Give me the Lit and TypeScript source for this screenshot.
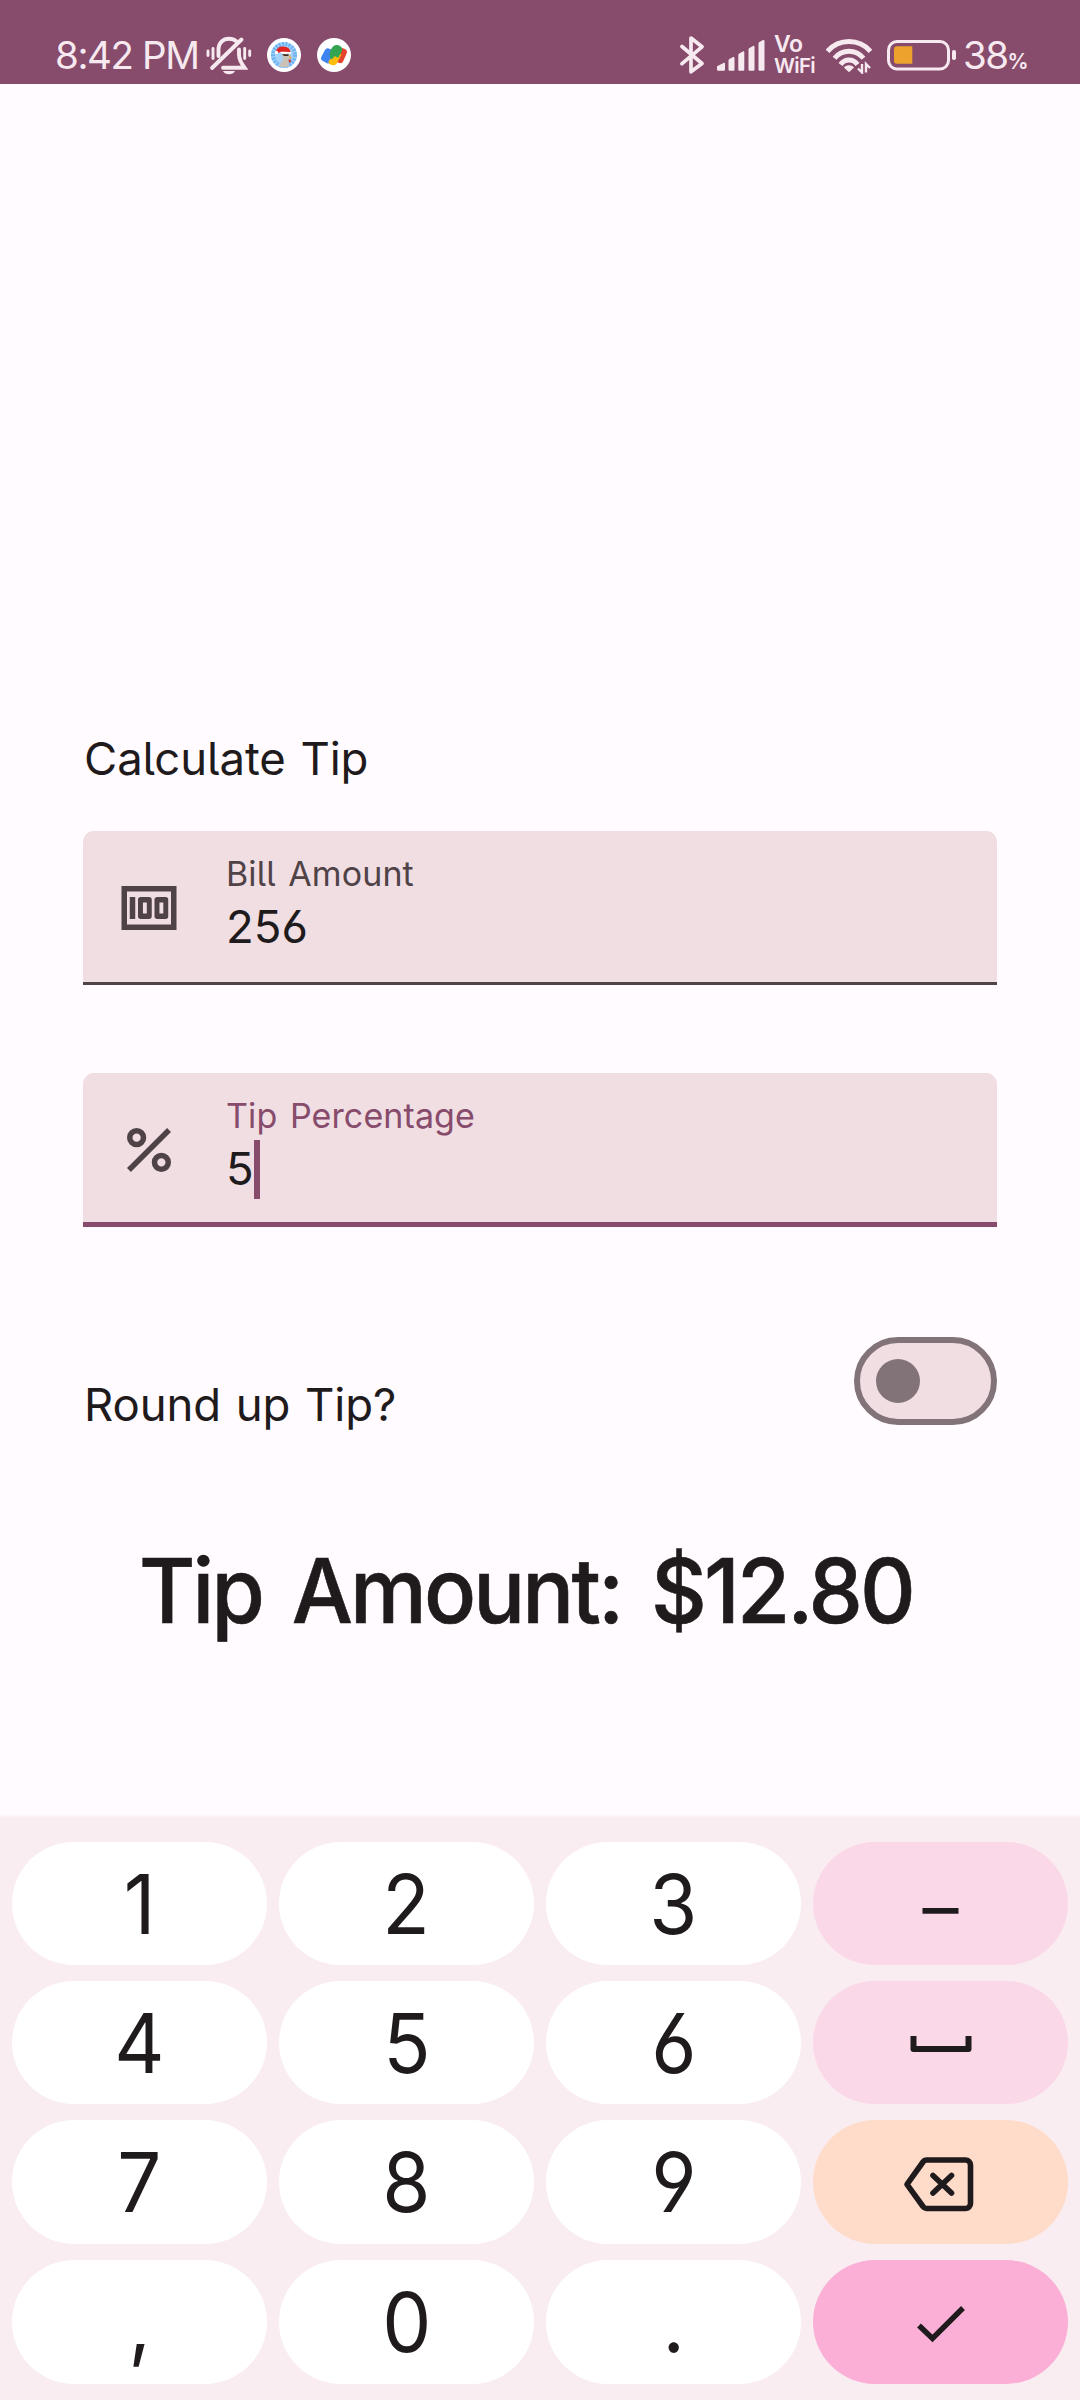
import { LitElement, html, css, svg } from "lit";
import { customElement, property, state } from "lit/decorators.js";

@customElement("status-bar")
class StatusBar extends LitElement {
  static styles = css`
    :host { display: block; }
    .bar {
      box-sizing: border-box; height: 84px; padding: 26px 0 0 55px;
      display: flex; align-items: flex-start; background: #874b6b; color: #f7e9f0;
      font-family: Inter, "Noto Sans", sans-serif;
    }
    svg { display: block; flex: none; }
    .time { width: 151px; font-size: 38.5px; line-height: 59px; letter-spacing: -1.4px; white-space: nowrap; }
    .bell { margin-top: 10px; }
    .app { margin: 12px 0 0 15px; }
    .app + .app { margin-left: 16px; }
    .fill { flex: 1; }
    .bt { margin: 9px 12px 0 0; }
    .sig { margin: 13px 8px 0 0; }
    .vo { margin: 8px 8px 0 0; width: 44px; font-weight: 600; line-height: 21px; white-space: nowrap; }
    .v1 { font-size: 23px; letter-spacing: -0.5px; }
    .v2 { font-size: 20.5px; letter-spacing: -0.7px; }
    .wifi { margin: 12px 12px 0 0; }
    .bat { margin: 13px 6px 0 0; }
    .pct { width: 117px; font-size: 38.5px; line-height: 59px; letter-spacing: -1.5px; white-space: nowrap; }
    .sign { font-size: 21px; font-weight: 600; }
  `;
  render() {
    return html`<div class="bar">
      <span class="time">8:42 PM</span>
      <svg class="bell" width="46" height="40" viewBox="0 0 46 40" fill="none" stroke="#f7e9f0" stroke-width="3.9" stroke-linecap="round">
        <path d="M12.5 20v-6.5C12.5 7 17 2.8 23 2.8c3 0 5.500.9 7.400 2.600M33 13.500v5c0 5 2 8.500 5.500 13.200H17M6 32 35.500 3.500"/>
        <path d="M2 15v4.500M7 12.500v10M38.700 12.500v10M43.700 15v4.500" stroke-width="2.900"/>
        <path d="M17 35h12c-1 2.300-3.300 3.300-6 3.300S18 37.300 17 35Z" fill="#f7e9f0" stroke="none"/>
      </svg>
      <svg class="app" width="34" height="34" viewBox="0 0 34 34">
        <circle cx="17" cy="17" r="17" fill="#fff"/>
        <circle cx="17" cy="17" r="13" fill="#a5d2f9"/>
        <circle cx="17" cy="17" r="11" fill="none" stroke="#6db3f4" stroke-width="4" stroke-dasharray="2 1.300"/>
        <path d="M14 13c2-2 8-2 9 1l1 6-2.500 1 .5 7c-3 2-8 1.500-10 0 1-3 3.500-4 4-8Z" fill="#c9c2b8"/>
        <path d="M8.500 14c1-4 4-6 8-5.500 4 .3 6.500 2 7 5.500l-9-.5-3 1.500Z" fill="#e32222"/>
        <circle cx="9.500" cy="14.500" r="1.700" fill="#fff"/>
        <path d="M13 14h11v1.800H15Z" fill="#fff"/>
        <path d="M15 16.300h6.500v1.700H17Z" fill="#3b3129"/>
        <path d="m22 18 3 1.500-2.500 1.500Z" fill="#e8a33a"/>
        <path d="M21.500 21.500h2.300v3h-1.800Z" fill="#d03028"/>
      </svg>
      <svg class="app" width="34" height="34" viewBox="0 0 34 34">
        <circle cx="17" cy="17" r="17" fill="#fff"/>
        <rect x="6" y="11" width="11" height="14" rx="3.500" transform="rotate(28 11.500 17)" fill="#3f83f0"/>
        <rect x="19.500" y="10" width="9" height="15" rx="3.500" transform="rotate(24 24 17)" fill="#e6432f"/>
        <path d="m19 14 5.500 2.500-4.500 8.500c-1.500 2.700-4.500 2.700-6.500 1.500-2-1-2.500-2.500-1.500-4Z" fill="#fbbc0a"/>
        <path d="M14 11.500c1.500-3.500 4.500-5.500 8-4 3 1.300 4 3.500 2.500 6.500l-3.500 6-3-2-3.500 3.500c-2-2-2.500-6-.5-10Z" fill="#33a452"/>
      </svg>
      <span class="fill"></span>
      <svg class="bt" width="25" height="40" viewBox="0 0 25 40" fill="none" stroke="#f7e9f0" stroke-width="3.700" stroke-linecap="round" stroke-linejoin="round">
        <path d="M2 11.500 22 28.500 11 36.800V3L22 11.800 2 28.700"/>
      </svg>
      <svg class="sig" width="49" height="33" viewBox="0 0 49 33" fill="#f7e9f0">
        <path d="M0 30.500v-3.200L6.500 24c.8-.4 1.500 0 1.500.8v5.700a1.200 1.200 0 0 1-1.200 1.300H1.200A1.200 1.200 0 0 1 0 30.500Z"/>
        <path d="M11.500 30.500V22c0-1 .3-1.500 1-1.900l3.500-2c.8-.4 1.500 0 1.500.8v11.600a1.200 1.200 0 0 1-1.200 1.300h-3.600a1.200 1.200 0 0 1-1.200-1.300Z"/>
        <path d="M21.300 30.500V16.300c0-1 .3-1.500 1-1.900l3.500-2c.8-.4 1.500 0 1.500.8v17.300a1.200 1.200 0 0 1-1.200 1.300h-3.600a1.200 1.200 0 0 1-1.200-1.300Z"/>
        <path d="M31.500 30.500V10.800c0-1 .3-1.500 1-1.900l3.500-2c.8-.4 1.500 0 1.500.8v22.800a1.200 1.200 0 0 1-1.200 1.300h-3.600a1.200 1.200 0 0 1-1.200-1.300Z"/>
        <path d="M41.500 30.500V5c0-1 .3-1.500 1-1.900l3.500-2c.8-.4 1.500 0 1.500.8v28.600a1.200 1.200 0 0 1-1.200 1.300h-3.600a1.200 1.200 0 0 1-1.200-1.300Z"/>
      </svg>
      <div class="vo"><div class="v1">Vo</div><div class="v2">WiFi</div></div>
      <svg class="wifi" width="49" height="36" viewBox="0 0 49 36" fill="none" stroke="#f7e9f0" stroke-width="4.900">
        <path d="M1.500 13.300C7 7 14.500 3.500 23 3.500s16 3.500 21.500 9.800M8.500 20.300c3.700-4.500 8.700-7 14.500-7s10.800 2.500 14.500 7M14.500 26.500c2-2.900 5-4.500 8.500-4.500s6.500 1.600 8.500 4.500"/>
        <path d="M18 29.500c2.500-3 7.500-3 10 0L23 34.300Z" fill="#f7e9f0" stroke="none"/>
        <path d="M36 26v8.500l-4-4M40 34.500V26l4 4" stroke-width="2.400"/>
      </svg>
      <svg class="bat" width="70" height="32" viewBox="0 0 70 32">
        <rect x="1.500" y="2.500" width="60" height="27.500" rx="8.500" fill="none" stroke="#f7e9f0" stroke-width="3"/>
        <path d="M10 7.300h15.300v17.400H10a3 3 0 0 1-3-3V10.300a3 3 0 0 1 3-3Z" fill="#eca22c"/>
        <rect x="65" y="11" width="4" height="10" rx="1.800" fill="#f7e9f0"/>
      </svg>
      <span class="pct">38<span class="sign">%</span></span>
    </div>`;
  }
}

@customElement("filled-field")
class FilledField extends LitElement {
  @property() label = "";
  @property() value = "";
  @property() icon = "money";
  @property({ type: Boolean }) active = false;
  static styles = css`
    :host { display: block; font-family: Inter, "Noto Sans", sans-serif; font-feature-settings: "cv03", "cv04", "cv05"; }
    .field {
      box-sizing: border-box; height: 154px; border-radius: 11px 11px 0 0; background: #f0dee3;
      border-bottom: 3px solid #504348; display: flex; color: #504348; padding-left: 33px;
    }
    .icon { width: 66px; height: 66px; margin-top: 44px; fill: #504348; flex: none; }
    .text { margin-left: 44px; padding-top: 21px; }
    .label { font-size: 34px; line-height: 44px; letter-spacing: 0.1px; word-spacing: 3px; white-space: nowrap; }
    .line { display: flex; align-items: center; height: 60px; margin-top: 1px; }
    .value { font-size: 45.5px; line-height: 60px; color: #1f1a1c; letter-spacing: 0; }
    .caret { width: 6px; height: 59px; background: #874b6b; }
    .active { border-bottom: 5px solid #874b6b; }
    .active .label { color: #874b6b; }
  `;
  render() {
    const glyph = this.icon === "money"
      ? svg`<path fill-rule="evenodd" d="M2 4h20v16H2ZM4 6v12h16V6ZM5 8h2v8H5ZM9 8h3a1 1 0 0 1 1 1v6a1 1 0 0 1-1 1H9a1 1 0 0 1-1-1V9a1 1 0 0 1 1-1ZM9.800 10v4h1.400v-4ZM15 8h3a1 1 0 0 1 1 1v6a1 1 0 0 1-1 1h-3a1 1 0 0 1-1-1V9a1 1 0 0 1 1-1ZM15.800 10v4h1.400v-4Z"/>`
      : svg`<path d="M7.500 4a3.500 3.500 0 1 0 0 7 3.500 3.500 0 0 0 0-7Zm0 5a1.500 1.500 0 1 1 0-3 1.500 1.500 0 0 1 0 3Zm9 4a3.500 3.500 0 1 0 0 7 3.500 3.500 0 0 0 0-7Zm0 5a1.500 1.500 0 1 1 0-3 1.500 1.500 0 0 1 0 3ZM5.410 20 4 18.590 18.590 4 20 5.410 5.410 20Z"/>`;
    return html`<div class="field ${this.active ? "active" : ""}">
      <svg class="icon" viewBox="0 0 24 24">${glyph}</svg>
      <div class="text">
        <div class="label">${this.label}</div>
        <div class="line"><span class="value">${this.value}</span>${this.active ? html`<span class="caret"></span>` : ""}</div>
      </div>
    </div>`;
  }
}

@customElement("number-pad")
class NumberPad extends LitElement {
  static styles = css`
    :host { display: block; font-family: Inter, "Noto Sans", sans-serif; font-feature-settings: "cv03", "cv04"; }
    .pad {
      box-sizing: border-box; height: 583px; padding: 25px 12px 0; background: #f9edf1;
      box-shadow: 0 -1px 2px #f9edf1;
      display: grid; grid-template-columns: repeat(4, 255px); grid-template-rows: 123px 123px 124px 124px;
      align-content: start; gap: 16px 12px;
    }
    .key {
      box-sizing: border-box; border-radius: 62px; background: #fff; color: #1f1a1c; font-size: 82px; line-height: 120px;
      display: flex; justify-content: center; align-items: center;
    }
    .digit { padding-top: 2px; }
    .digit span { transform: scaleX(0.95); }
    .pink { background: #fbd8e8; }
    .peach { background: #ffdbc9; padding-right: 3px; }
    .ok { background: #fbafd6; padding-top: 3px; }
    .dash { font-size: 72px; padding-top: 6px; }
    svg { display: block; fill: none; stroke: #1f1a1c; }
  `;
  private num(t: string) { return html`<div class="key digit"><span>${t}</span></div>`; }
  render() {
    return html`<div class="pad">
      ${["1", "2", "3"].map(this.num)}
      <div class="key pink dash">–</div>
      ${["4", "5", "6"].map(this.num)}
      <div class="key pink"><svg width="62" height="20" viewBox="0 0 62 20" stroke-width="6" stroke-linejoin="round"><path d="M3.500 3v13h55V3"/></svg></div>
      ${["7", "8", "9"].map(this.num)}
      <div class="key peach"><svg width="72" height="60" viewBox="0 0 72 60" stroke-width="5.600" stroke-linejoin="round" stroke-linecap="round"><path d="M24 8h38.500a5 5 0 0 1 5 5v38.500a5 5 0 0 1-5 5H23.500a4.500 4.500 0 0 1-3.500-2L4 32.300 20 10a4.500 4.500 0 0 1 4-2ZM30 23.500l18.500 17.500M48.500 23.500 30 41"/></svg></div>
      ${[",", "0", "."].map(this.num)}
      <div class="key ok"><svg width="50" height="40" viewBox="0 0 50 40" stroke-width="5.500"><path d="M3 21.500 16.500 34.500 47 4"/></svg></div>
    </div>`;
  }
}

@customElement("app-root")
class AppRoot extends LitElement {
  @state() private bill = "256";
  @state() private tip = "5";
  static styles = css`
    :host {
      display: block; width: 1080px; height: 2400px; overflow: hidden; background: #fffbff; color: #1f1a1c;
      font-family: Inter, "Noto Sans", sans-serif; font-feature-settings: "cv03", "cv04", "cv05";
    }
    .page { height: 2400px; display: flex; flex-direction: column; }
    .form { flex: 1; padding: 645px 83px 0; }
    .body { font-size: 45.500px; line-height: 60px; letter-spacing: -0.1px; word-spacing: 2px; padding-left: 1px; white-space: nowrap; }
    .first { margin-top: 42px; }
    .second { margin-top: 88px; }
    .row { display: flex; justify-content: space-between; align-items: flex-start; margin-top: 110px; height: 88px; }
    .row .body { padding-top: 38px; }
    .first, .second { height: 154px; }
    .switch {
      box-sizing: border-box; width: 143px; height: 88px; border: 6px solid #827379; border-radius: 44px;
      background: #f0dee3; padding: 16px; display: flex;
    }
    .thumb { width: 44px; height: 44px; border-radius: 50%; background: #827379; }
    .total { margin-top: 106px; padding-left: 56px; font-size: 90px; line-height: 120px; font-weight: 500; letter-spacing: -3px; word-spacing: 10px; white-space: nowrap; transform: scaleX(0.96); transform-origin: 56px 50%; -webkit-text-stroke: 0.600px #1f1a1c; }
  `;
  render() {
    const amount = (Number(this.bill) * Number(this.tip) / 100).toFixed(2);
    return html`<div class="page">
      <status-bar></status-bar>
      <div class="form">
        <div class="body">Calculate Tip</div>
        <filled-field class="first" label="Bill Amount" .value=${this.bill} icon="money"></filled-field>
        <filled-field class="second" label="Tip Percentage" .value=${this.tip} icon="percent" active></filled-field>
        <div class="row">
          <div class="body">Round up Tip?</div>
          <div class="switch"><div class="thumb"></div></div>
        </div>
        <div class="total">Tip Amount: $${amount}</div>
      </div>
      <number-pad></number-pad>
    </div>`;
  }
}
